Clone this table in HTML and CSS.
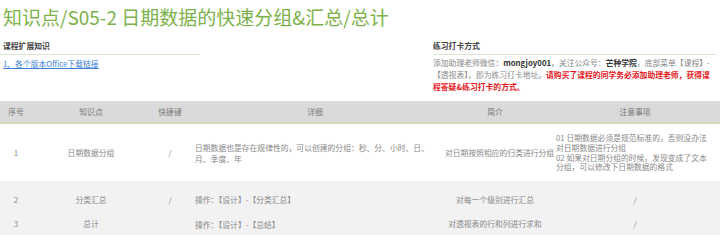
FILE: index.html
```html
<!DOCTYPE html>
<html lang="zh-CN">
<head>
<meta charset="utf-8">
<link rel="stylesheet" href="styles.css">
</head>
<body>
<h1 class="title">知识点/S05-2 日期数据的快速分组&amp;汇总/总计</h1>
<div class="info">
  <section class="ext">
    <h2 class="sec-head">课程扩展知识</h2>
    <a class="dl-link" href="#">1、各个版本Office下载链接</a>
  </section>
  <section class="punch">
    <h2 class="sec-head">练习打卡方式</h2>
    <div class="punch-text">
      <div class="line">添加助理老师微信：<b class="strong">mongjoy001</b>，关注公众号：<b class="strong">芒种学院</b>，底部菜单【课程】-</div>
      <div class="line">【透视表】，即为练习打卡地址。<b class="warn">请购买了课程的同学务必添加助理老师，获得课</b></div>
      <div class="line"><b class="warn">程答疑&amp;练习打卡的方式。</b></div>
    </div>
  </section>
</div>
<table class="kp">
  <colgroup>
    <col class="c1"><col class="c2"><col class="c3"><col class="c4"><col class="c5"><col class="c6">
  </colgroup>
  <thead>
    <tr><th>序号</th><th>知识点</th><th>快捷键</th><th>详细</th><th>简介</th><th>注意事项</th></tr>
  </thead>
  <tbody>
    <tr class="r1">
      <td>1</td><td>日期数据分组</td><td>/</td>
      <td class="detail">日期数据也是存在规律性的，可以创建的分组：秒、分、小时、日、月、季度、年</td>
      <td class="nowrap">对日期按照相应的归类进行分组</td>
      <td class="notes">01 日期数据必须是规范标准的，否则没办法对日期数据进行分组<br>02 如果对日期分组的时候，发现变成了文本分组，可以修改下日期数据的格式</td>
    </tr>
    <tr class="gray first">
      <td>2</td><td>分类汇总</td><td>/</td>
      <td class="detail">操作：【设计】-【分类汇总】</td>
      <td class="nowrap">对每一个级别进行汇总</td>
      <td>/</td>
    </tr>
    <tr class="gray">
      <td>3</td><td>总计</td><td></td>
      <td class="detail">操作：【设计】-【总结】</td>
      <td class="nowrap">对透视表的行和列进行求和</td>
      <td>/</td>
    </tr>
  </tbody>
</table>
</body>
</html>
```
FILE: styles.css
```css
html, body {
  margin: 0;
  padding: 0;
  background: #ffffff;
}
body {
  font-family: "Noto Sans CJK SC", "Noto Sans", sans-serif;
  color: #777;
  font-size: 7.8px;
  line-height: 10px;
  width: 720px;
  overflow: hidden;
}
.title {
  margin: 0;
  padding: 4px 0 0 3px;
  height: 36px;
  box-sizing: border-box;
  font-size: 19px;
  line-height: 26px;
  font-weight: normal;
  color: #7db24a;
  white-space: nowrap;
}
.info {
  display: flex;
  justify-content: space-between;
  height: 65px;
}
.ext {
  width: 200px;
}
.punch {
  width: 283px;
  padding-right: 4px;
}
.sec-head {
  margin: 0;
  font-size: 7.8px;
  line-height: 10px;
  font-weight: bold;
  color: #444;
  padding: 5px 0 3px 3px;
  border-bottom: 1px solid #dde5d2;
}
.punch .sec-head {
  padding-left: 0;
}
.dl-link {
  display: block;
  padding: 4px 0 0 3px;
  color: #3d7fd6;
  text-decoration: underline;
}
.punch-text {
  padding-top: 2px;
  color: #888;
}
.line {
  line-height: 12px;
  white-space: nowrap;
}
.strong {
  color: #333;
}
.warn {
  color: #e8191e;
}
.kp {
  width: 720px;
  border-collapse: collapse;
  table-layout: fixed;
}
.c1 { width: 32px; }
.c2 { width: 118px; }
.c3 { width: 40px; }
.c4 { width: 250px; }
.c5 { width: 110px; }
.c6 { width: 170px; }
.kp th {
  background: #dadada;
  color: #777;
  font-weight: normal;
  height: 21px;
  padding: 0;
  text-align: center;
  border-bottom: 2px solid #cfdcb8;
}
.kp td {
  text-align: center;
  vertical-align: middle;
  padding: 0 5px;
  color: #888;
}
.r1 td {
  height: 57px;
}
.kp td.detail {
  text-align: left;
  padding-right: 2px;
  line-height: 11px;
}
.kp td.notes {
  text-align: left;
  padding: 0 8px 0 6px;
  line-height: 9.8px;
}
.nowrap {
  white-space: nowrap;
}
.gray td {
  background: #f2f2f2;
  height: 22px;
}
.first td {
  height: 27px;
  padding-top: 5px;
}
```
